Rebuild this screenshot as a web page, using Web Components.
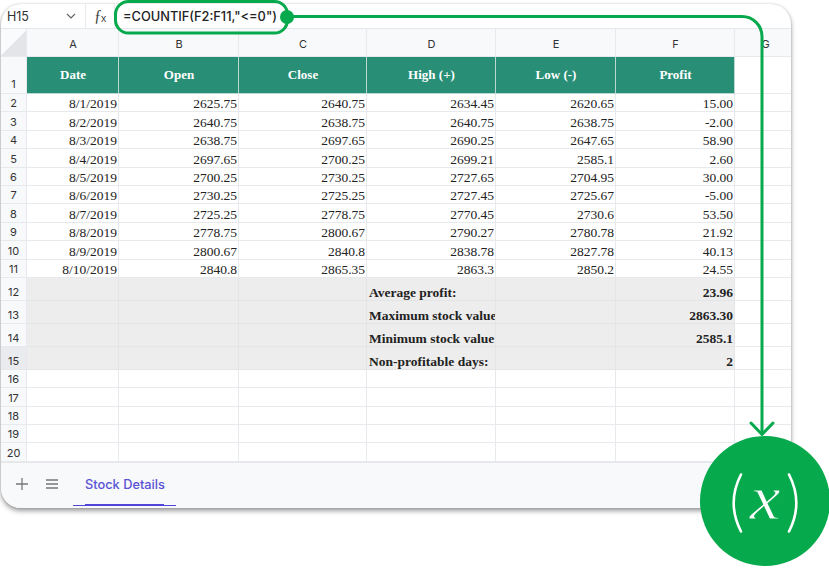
<!DOCTYPE html>
<html>
<head>
<meta charset="utf-8">
<title>Stock Details</title>
<style>
  html, body { margin: 0; height: 100%; background: #fff; overflow: hidden; }
  body { position: relative; font-family: "Inter", "Liberation Sans", sans-serif; }
</style>
</head>
<body>
<sheet-card>
  <formula-bar slot="top" cell="H15" formula='=COUNTIF(F2:F11,"&lt;=0")'></formula-bar>
  <stock-grid></stock-grid>
  <tab-bar slot="bottom" label="Stock Details"></tab-bar>
</sheet-card>
<formula-callout></formula-callout>

<script>
const COLS = ['A', 'B', 'C', 'D', 'E', 'F', 'G'];
const HEAD = ['Date', 'Open', 'Close', 'High (+)', 'Low (-)', 'Profit'];
const ROWS = [
  ['8/1/2019', '2625.75', '2640.75', '2634.45', '2620.65', '15.00'],
  ['8/2/2019', '2640.75', '2638.75', '2640.75', '2638.75', '-2.00'],
  ['8/3/2019', '2638.75', '2697.65', '2690.25', '2647.65', '58.90'],
  ['8/4/2019', '2697.65', '2700.25', '2699.21', '2585.1', '2.60'],
  ['8/5/2019', '2700.25', '2730.25', '2727.65', '2704.95', '30.00'],
  ['8/6/2019', '2730.25', '2725.25', '2727.45', '2725.67', '-5.00'],
  ['8/7/2019', '2725.25', '2778.75', '2770.45', '2730.6', '53.50'],
  ['8/8/2019', '2778.75', '2800.67', '2790.27', '2780.78', '21.92'],
  ['8/9/2019', '2800.67', '2840.8', '2838.78', '2827.78', '40.13'],
  ['8/10/2019', '2840.8', '2865.35', '2863.3', '2850.2', '24.55'],
];
const SUMMARY = [
  ['Average profit:', '23.96'],
  ['Maximum stock value', '2863.30'],
  ['Minimum stock value', '2585.1'],
  ['Non-profitable days:', '2'],
];

class SheetCard extends HTMLElement {
  constructor() {
    super();
    this.attachShadow({mode: 'open'});
    this.shadowRoot.innerHTML = `
      <style>
        :host {
          display: flex;
          flex-direction: column;
          box-sizing: border-box;
          width: 790px;
          height: 504px;
          margin: 4px 0 0 1px;
          background: #fff;
          border-radius: 20px;
          overflow: hidden;
          box-shadow: 0 0 2px rgba(0,0,0,.2), 0 3px 5px rgba(0,0,0,.38);
        }
      </style>
      <slot name="top"></slot>
      <slot></slot>
      <slot name="bottom"></slot>
    `;
  }
}

class FormulaBar extends HTMLElement {
  constructor() {
    super();
    this.attachShadow({mode: 'open'});
  }
  connectedCallback() {
    this.shadowRoot.innerHTML = `
      <style>
        :host {
          display: grid;
          grid-template-columns: 85px 29px 1fr;
          height: 25px;
          flex: none;
          box-sizing: border-box;
          border-bottom: 1px solid #e6e7ea;
          font: 12.5px "Inter", sans-serif;
          color: #333;
        }
        .name { display: flex; align-items: center; justify-content: space-between; padding: 0 9px 0 6px; border-right: 1px solid #e9eaec; }
        .fx { display: flex; align-items: center; justify-content: center; font: 16px "Liberation Serif", serif; color: #444; border-right: 1px solid #e9eaec; }
        .fx small { font: 10.5px "Liberation Sans", sans-serif; margin: 3px 0 0 -1px; }
        .value { display: flex; align-items: center; padding-left: 8px; font: 500 12.8px "Inter", sans-serif; color: #222; white-space: nowrap; }
        svg { display: block; }
      </style>
      <div class="name">
        <span>${this.getAttribute('cell')}</span>
        <svg width="10" height="6" viewBox="0 0 10 6" fill="none" stroke="#666" stroke-width="1.2"><path d="M1 1l4 4 4-4"/></svg>
      </div>
      <div class="fx">&#402;<small>x</small></div>
      <div class="value"></div>
    `;
    this.shadowRoot.querySelector('.value').textContent = this.getAttribute('formula');
  }
}

class StockGrid extends HTMLElement {
  constructor() {
    super();
    this.attachShadow({mode: 'open'});
  }
  connectedCallback() {
    const cell = (cls, text = '') => `<div class="c ${cls}"><span>${text}</span></div>`;
    let html = cell('corner');
    COLS.forEach(c => html += cell('colhead', c));

    html += cell('rowhead first', 1);
    HEAD.forEach(h => html += cell('green', h));
    html += cell('');

    ROWS.forEach((r, i) => {
      html += cell('rowhead', i + 2);
      r.forEach(v => html += cell('num', v));
      html += cell('');
    });

    SUMMARY.forEach(([label, value], i) => {
      html += cell('rowhead' + (i === 3 ? ' sel' : ''), i + 12);
      html += cell('grey') + cell('grey') + cell('grey');
      html += cell('grey label', label) + cell('grey');
      html += cell('grey total', value) + cell('');
    });

    for (let n = 16; n <= 20; n++) {
      html += cell('rowhead', n);
      for (let k = 0; k < 7; k++) html += cell('');
    }

    this.shadowRoot.innerHTML = `
      <style>
        :host {
          display: grid;
          flex: none;
          grid-template-columns: 26px 92px 120px 128px 129px 120px 119px 61px;
          grid-template-rows: 28px 37px repeat(10, 18.4px) repeat(4, 23px) repeat(5, 18.4px);
          font: 13.5px "Liberation Serif", serif;
          color: #222;
        }
        .c {
          box-sizing: border-box;
          display: flex;
          align-items: flex-end;
          min-width: 0;
          overflow: hidden;
          white-space: nowrap;
          border-right: 1px solid #e8e9ec;
          border-bottom: 1px solid #e8e9ec;
        }
        .corner { background: linear-gradient(135deg, #fafbfc 50%, #e3e5e8 50%); }
        .colhead, .rowhead {
          background: #f8f9fb;
          font: 11px "Inter", sans-serif;
          color: #333;
          justify-content: center;
        }
        .colhead { align-items: center; padding: 2px 0 0 1px; }
        .rowhead { padding-bottom: 1px; }
        .first { padding-bottom: 2px; }
        .sel { background: #e9ebee; }
        .green {
          background: #288e75;
          color: #fff;
          font-weight: bold;
          font-size: 13px;
          align-items: center;
          justify-content: center;
          padding-left: 1px;
          border-color: #bcd9d1;
        }
        .num { justify-content: flex-end; padding-right: 1px; line-height: 15px; }
        .grey { background: #ededed; border-color: #e4e5e7; font-weight: bold; line-height: 14px; }
        .label { padding-left: 2px; }
        .total { justify-content: flex-end; padding-right: 1px; }
      </style>
      ${html}
    `;
  }
}

class TabBar extends HTMLElement {
  constructor() {
    super();
    this.attachShadow({mode: 'open'});
  }
  connectedCallback() {
    this.shadowRoot.innerHTML = `
      <style>
        :host {
          display: flex;
          flex: 1;
          align-items: stretch;
          box-sizing: border-box;
          padding-left: 14px;
          background: #f8f9fb;
          border-top: 1px solid #e6e7ea;
        }
        .btn { display: flex; align-items: center; width: 30px; padding-bottom: 2px; }
        .tab {
          display: flex;
          align-items: center;
          margin-left: -2px;
          padding: 2px 11px 0 12px;
          height: 43px;
          box-sizing: border-box;
          border-bottom: 1px solid #4f46d8;
          font: 500 12.8px "Inter", sans-serif;
          color: #5b53d6;
          position: relative;
        }
        .tab::after {
          content: '';
          position: absolute;
          left: 12px; right: 12px; bottom: -1px;
          height: 2px;
          background: #4f46d8;
        }
      </style>
      <div class="btn">
        <svg width="14" height="14" viewBox="0 0 14 14" fill="none" stroke="#777" stroke-width="1.3"><path d="M7 1v12M1 7h12"/></svg>
      </div>
      <div class="btn">
        <svg width="14" height="12" viewBox="0 0 14 12" fill="none" stroke="#777" stroke-width="1.3"><path d="M1 2h12M1 6h12M1 10h12"/></svg>
      </div>
      <div class="tab">${this.getAttribute('label')}</div>
    `;
  }
}

// green highlight, connector and the (x) badge all sit over the sheet
class FormulaCallout extends HTMLElement {
  constructor() {
    super();
    this.attachShadow({mode: 'open'});
    this.shadowRoot.innerHTML = `
      <style>
        :host { position: absolute; left: 0; top: 0; width: 829px; height: 572px; pointer-events: none; display: block; }
        svg { position: absolute; left: 0; top: 0; }
        .badge {
          position: absolute;
          left: 700px; top: 436px;
          width: 130px; height: 130px;
          border-radius: 50%;
          background: #06a94c;
          color: #fff;
          display: flex;
          align-items: center;
          justify-content: center;
          overflow: hidden;
        }
        .x {
          font: italic 64px "Liberation Serif", serif;
          margin: 0 8px 6px;
          line-height: 1;
          transform: scaleX(1.08);
          -webkit-text-stroke: .9px #06a94c;
        }
        .badge svg { position: static; margin-top: 4px; }
      </style>
      <svg width="829" height="572" fill="none" stroke="#06a94c" stroke-width="3">
        <rect x="115.500" y="1.500" width="172" height="31.500" rx="13"/>
        <path d="M287 16.500H742a20 20 0 0 1 20 20V434"/>
        <path d="M751 423l11 11.500 11-11.500" stroke-linecap="round" stroke-linejoin="round"/>
        <circle cx="287" cy="17" r="7" fill="#06a94c" stroke="none"/>
      </svg>
      <div class="badge">
        <svg width="12" height="60" viewBox="0 0 12 60" fill="none" stroke="#fff" stroke-width="2.600" stroke-linecap="round"><path d="M10 1.500C.5 20 .5 40 10 58.500"/></svg>
        <span class="x">x</span>
        <svg width="12" height="60" viewBox="0 0 12 60" fill="none" stroke="#fff" stroke-width="2.600" stroke-linecap="round"><path d="M2 1.500C11.500 20 11.500 40 2 58.500"/></svg>
      </div>
    `;
  }
}

customElements.define('sheet-card', SheetCard);
customElements.define('formula-bar', FormulaBar);
customElements.define('stock-grid', StockGrid);
customElements.define('tab-bar', TabBar);
customElements.define('formula-callout', FormulaCallout);
</script>
</body>
</html>
